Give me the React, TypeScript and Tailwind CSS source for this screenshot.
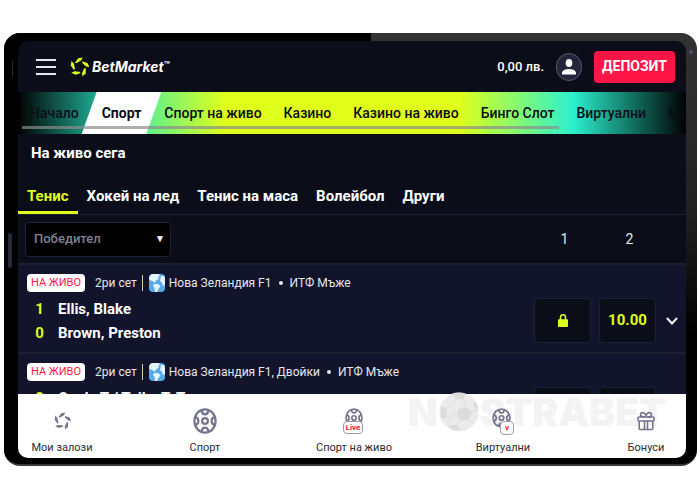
import { clsx } from 'clsx'
import type { ReactNode } from 'react'

const categories = ['Начало', 'Спорт', 'Спорт на живо', 'Казино', 'Казино на живо', 'Бинго Слот', 'Виртуални', 'Бонуси']
const sports = ['Тенис', 'Хокей на лед', 'Тенис на маса', 'Волейбол', 'Други']

const events = [
  {
    id: 1,
    league: 'Нова Зеландия F1',
    group: 'ИТФ Мъже',
    players: [
      { name: 'Ellis, Blake', score: 1 },
      { name: 'Brown, Preston', score: 0 },
    ],
    odds: [null, '10.00'],
  },
  {
    id: 2,
    league: 'Нова Зеландия F1, Двойки',
    group: 'ИТФ Мъже',
    players: [{ name: 'Cook, T / Tolle, T. T.', score: 0 }],
    odds: [null, null],
  },
]

function StarIcon({ className }: { className?: string }) {
  return (
    <svg viewBox="0 0 20 20" className={className} fill="currentColor" aria-hidden="true">
      {[0, 72, 144, 216, 288].map((a) => (
        <path key={a} d="M5.2 5.4 L8.600 .8 L13.400 0 L11.600 3.200 L7.200 5.800 Z" transform={`rotate(${a} 10 10)`} />
      ))}
    </svg>
  )
}

function BallIcon({ className }: { className?: string }) {
  return (
    <svg viewBox="0 0 24 26" preserveAspectRatio="none" className={className} fill="none" stroke="currentColor" strokeWidth="2.2" aria-hidden="true">
      <ellipse cx="12" cy="13" rx="10.6" ry="11.6" />
      <circle cx="12" cy="13" r="2.9" />
      <path d="M8.5 2.5c.4 2.6 1.6 3.8 3.5 3.8s3.1-1.2 3.5-3.8M8.5 23.5c.4-2.6 1.6-3.8 3.5-3.8s3.1 1.2 3.5 3.8" />
      <path d="M2 9.2c2.3.2 3.4 1.5 3.4 3.8s-1.1 3.6-3.4 3.8M22 9.2c-2.3.2-3.4 1.5-3.4 3.8s1.1 3.6 3.4 3.8" />
    </svg>
  )
}

function GiftIcon() {
  return (
    <svg viewBox="0 0 18 20" className="h-5 w-[18px]" fill="none" stroke="currentColor" strokeWidth="1.6" aria-hidden="true">
      <rect x="1" y="6" width="16" height="4" rx="1" />
      <path d="M2.2 10v7.5q0 1 1 1h11.6q1 0 1-1V10M7.5 10v8.5M10.5 10v8.5" />
      <path d="M7.5 6C4 6 3.2 4.5 3.6 3 4.2 1 7.5 .8 9 4.5 10.5 .8 13.8 1 14.4 3 14.8 4.5 14 6 10.5 6" />
    </svg>
  )
}

function GlobeIcon() {
  return (
    <svg viewBox="0 0 16 18" className="h-[18px] w-4" aria-hidden="true">
      <rect width="16" height="18" rx="4" fill="#56aaea" />
      <path d="M0 4Q1 0 4 0h6l1 1.5-2 1.5 1 1.5-3 2-1 2.5-2-1.5-2-1-2-1ZM5 10l4 0 2.5 2-2 3-1.5 3H6l-.5-4-1.5-2ZM12 2l3 0 1 2v7l-2 1-1-3-2-2Z" fill="#e4f2fb" />
    </svg>
  )
}

function SoccerBall() {
  return (
    <svg viewBox="0 0 40 40" className="h-10 w-10" aria-hidden="true">
      <circle cx="20" cy="20" r="19.5" fill="#ebebeb" />
      <path d="M13 1.8Q20-.5 27 2l-3 5-7 0ZM2 14l5 3 1 8-5 2Q.5 20 2 14ZM19 17l8-2 6 5-3 8-8 1-4-6ZM35 8l4 6-1 4-4-4ZM10 33l7 0 4 5Q14 39 10 35Z" fill="#dcdcdc" />
      <path d="M17 7l-10 10M24 7l3 8M8 25l10-2M22 29l-5 4M33 20l5-2M30 28l4 4" stroke="#dedede" />
    </svg>
  )
}

function LockIcon() {
  return (
    <svg viewBox="0 0 10 13" className="h-[13px] w-2.5" aria-hidden="true">
      <path d="M2.5 6V3.5a2.5 2.7 0 0 1 5 0V6" fill="none" stroke="currentColor" strokeWidth="1.5" />
      <rect y="5.3" width="10" height="7.7" rx="1" fill="currentColor" />
    </svg>
  )
}

function Header() {
  return (
    <header className="flex h-[51px] items-center pl-[18px] pr-[11px]">
      <button aria-label="Меню" className="flex w-5 flex-col gap-[5px]">
        <span className="h-0.5 bg-gray-200" />
        <span className="h-0.5 bg-gray-200" />
        <span className="h-0.5 bg-gray-200" />
      </button>
      <a href="#" className="ml-3.5 flex items-center gap-[3px] font-['Inter'] text-[14px] font-bold italic text-white">
        <StarIcon className="h-5 w-[19px] text-[#dfff1a]" />
        <span className="flex items-center">
          BetMarket<span className="pb-1 text-[10px] font-medium not-italic leading-3">™</span>
        </span>
      </a>
      <span className="ml-auto text-[13px] font-medium text-white">0,00 лв.</span>
      <button aria-label="Профил" className="ml-3 flex h-7 w-[26px] items-end justify-center rounded-full border border-[#55586b] bg-[#23263b] pb-[5px]">
        <svg viewBox="0 0 14 16" className="h-4 w-3.5" fill="#fff" aria-hidden="true">
          <ellipse cx="7" cy="4" rx="3.3" ry="4" />
          <path d="M0 15.5V13.5Q1 10 7 10t7 3.5v2Z" />
        </svg>
      </button>
      <button className="ml-3 h-8 w-[81px] rounded-sm bg-[#ff1446] text-[14px] font-bold text-white">ДЕПОЗИТ</button>
    </header>
  )
}

function CategoryNav() {
  return (
    <nav className="relative h-[42px] overflow-hidden bg-[linear-gradient(90deg,#000_0%,#0b3c34_4%,#1fae94_12%,#5cf090_19%,#dfff1a_31%,#dfff1a_66%,#8dfa69_74%,#2cf0cf_83%,#0f6354_93%,#000_100%)]">
      <div className="flex h-full items-center gap-[22px] whitespace-nowrap pl-3 text-[14px] font-medium text-[#0b0d19]">
        {categories.map((name) => (
          <a
            key={name}
            href="#"
            className={clsx(
              'flex h-full items-center',
              name === 'Спорт' && '-mx-[19px] bg-white px-5 font-bold [clip-path:polygon(15px_0,100%_0,calc(100%-15px)_100%,0_100%)]',
            )}
          >
            {name}
          </a>
        ))}
      </div>
      <div className="absolute bottom-[5px] left-1 right-[127px] h-[3px] bg-[#8c8c8c]/70" />
    </nav>
  )
}

function OddsButton({ value }: { value: string | null }) {
  return (
    <button
      aria-label={value ?? 'Заключен'}
      className="flex h-[45px] w-[57px] items-center justify-center rounded border border-[#1d2036] bg-[#0b0d19] text-[15px] font-bold text-[#dfff1a]"
    >
      {value ?? <LockIcon />}
    </button>
  )
}

function EventRow({ event }: { event: (typeof events)[number] }) {
  return (
    <li className="h-[89px] border-t-2 border-[#1c1f31] pl-[9px] pr-1.5 pt-2">
      <div className="flex h-5 items-center whitespace-nowrap text-xs text-gray-200">
        <span className="flex h-[18px] w-[58px] items-center justify-center rounded bg-white text-[11px] text-[#ff1446]">НА ЖИВО</span>
        <span className="ml-2.5">2ри сет</span>
        <span className="ml-[5px] h-4 w-px bg-[#d9c9a8]" />
        <span className="ml-1.5">
          <GlobeIcon />
        </span>
        <span className="ml-1">{event.league}</span>
        <span className="mx-[7px] h-1 w-1 rounded-full bg-gray-200" />
        <span>{event.group}</span>
      </div>
      <div className="flex">
        <div className="flex-1 pt-1 text-[15px] font-bold">
          {event.players.map((p) => (
            <div key={p.name} className="flex h-6 items-center">
              <span className="w-[25px] text-center text-[#dfff1a]">{p.score}</span>
              <span className="ml-1.5 text-white">{p.name}</span>
            </div>
          ))}
        </div>
        <div className="flex items-start gap-2 pt-[5px]">
          {event.odds.map((o, i) => (
            <OddsButton key={i} value={o} />
          ))}
        </div>
        <button aria-label="Покажи" className="ml-2 mt-[5px] flex h-[45px] w-4 items-center justify-center text-white">
          <svg viewBox="0 0 12 8" className="h-2 w-3" fill="none" stroke="currentColor" strokeWidth="2" aria-hidden="true">
            <path d="M1 1l5 5.5 5-5.5" />
          </svg>
        </button>
      </div>
    </li>
  )
}

function BottomItem({ label, wide, children }: { label: string; wide?: boolean; children: ReactNode }) {
  return (
    <a href="#" className={clsx('flex flex-col items-center text-[11px] leading-4 text-[#2b2b30]', wide ? 'w-[92px]' : 'w-20')}>
      <span className="flex h-[38px] items-center justify-center text-[#74748f]">{children}</span>
      <span className="whitespace-nowrap">{label}</span>
    </a>
  )
}

function BottomNav() {
  return (
    <nav className="relative h-16 bg-white">
      <div className="absolute -top-0.5 right-5 flex items-center font-['Inter'] text-[39px] leading-10 font-black text-[#f3f3f3]" aria-hidden="true">
        <span className="mr-0.5">N</span>
        <SoccerBall />
        <span>STRABET</span>
      </div>
      <div className="relative flex justify-between pl-1 pt-2">
        <BottomItem label="Мои залози">
          <StarIcon className="h-[18px] w-[17px]" />
        </BottomItem>
        <BottomItem label="Спорт" wide>
          <BallIcon className="h-[26px] w-6" />
        </BottomItem>
        <BottomItem label="Спорт на живо" wide>
          <span className="relative h-[26px] w-[18px]">
            <BallIcon className="h-5 w-[18px]" />
            <span className="absolute -left-0.5 top-[13px] flex h-[13px] w-5 items-center justify-center rounded-sm border border-[#9a9ab0] bg-white text-[8px] font-bold text-[#ff1446]">Live</span>
          </span>
        </BottomItem>
        <BottomItem label="Виртуални" wide>
          <span className="relative h-[26px] w-[22px]">
            <BallIcon className="h-5 w-[19px]" />
            <span className="absolute left-2 top-[13px] flex h-[14px] w-3.5 items-center justify-center rounded-sm border border-[#9a9ab0] bg-white text-[8px] font-bold text-[#ff1446]">v</span>
          </span>
        </BottomItem>
        <BottomItem label="Бонуси">
          <GiftIcon />
        </BottomItem>
      </div>
    </nav>
  )
}

export default function App() {
  return (
    <div className="bg-white pb-7 pl-1 pr-[3px] pt-[33px] font-['Roboto',sans-serif]">
      <div className="relative rounded-2xl border-b-2 border-[#3a3637] bg-[linear-gradient(to_bottom,#333_0,#222_40%,#000_70%)]">
        <div className="rounded-2xl bg-[linear-gradient(90deg,#000_53%,transparent_53%)] pb-1.5 pl-3.5 pr-[11px] pt-2">
          <div className="overflow-hidden rounded-[10px] bg-[#0b0d19]">
            <Header />
            <CategoryNav />
            <main>
              <h2 className="px-[13px] pt-2 text-[15px] font-bold leading-[22px] text-white">На живо сега</h2>
              <div role="tablist" className="mt-4 flex h-[35px] border-b border-[#1d2036] text-[15px] font-bold">
                {sports.map((name, i) => (
                  <button
                    key={name}
                    role="tab"
                    aria-selected={i === 0}
                    className={clsx(
                      'border-b-[3px] px-[9px] pt-0.5',
                      i === 0 ? 'border-[#dfff1a] text-[#dfff1a]' : 'border-transparent text-white',
                    )}
                  >
                    {name}
                  </button>
                ))}
              </div>
              <div className="flex h-12 items-center pl-[7px] text-sm text-gray-200">
                <div className="relative">
                  <select
                    aria-label="Пазар"
                    className="h-[35px] w-[146px] appearance-none rounded border border-[#1d2036] bg-black pl-2 text-[13px] font-medium text-[#7f8093]"
                  >
                    <option>Победител</option>
                  </select>
                  <span className="pointer-events-none absolute right-1.5 top-2.5 text-[10px] text-white">▼</span>
                </div>
                <span className="ml-auto w-[57px] text-center">1</span>
                <span className="ml-2 mr-[28px] w-[57px] text-center">2</span>
              </div>
              <ul className="max-h-[131px] overflow-hidden bg-[#12142b]">
                {events.map((e) => (
                  <EventRow key={e.id} event={e} />
                ))}
              </ul>
            </main>
            <BottomNav />
          </div>
        </div>
        <span className="absolute left-1 top-[200px] h-[35px] w-1 rounded bg-[#232c3b]" />
        <span className="absolute left-2 top-7 h-4 w-px bg-[#2a2a2a]" />
        <span className="absolute right-1 top-[17px] h-1 w-1 rounded-full bg-[#4a566b]" />
      </div>
    </div>
  )
}
